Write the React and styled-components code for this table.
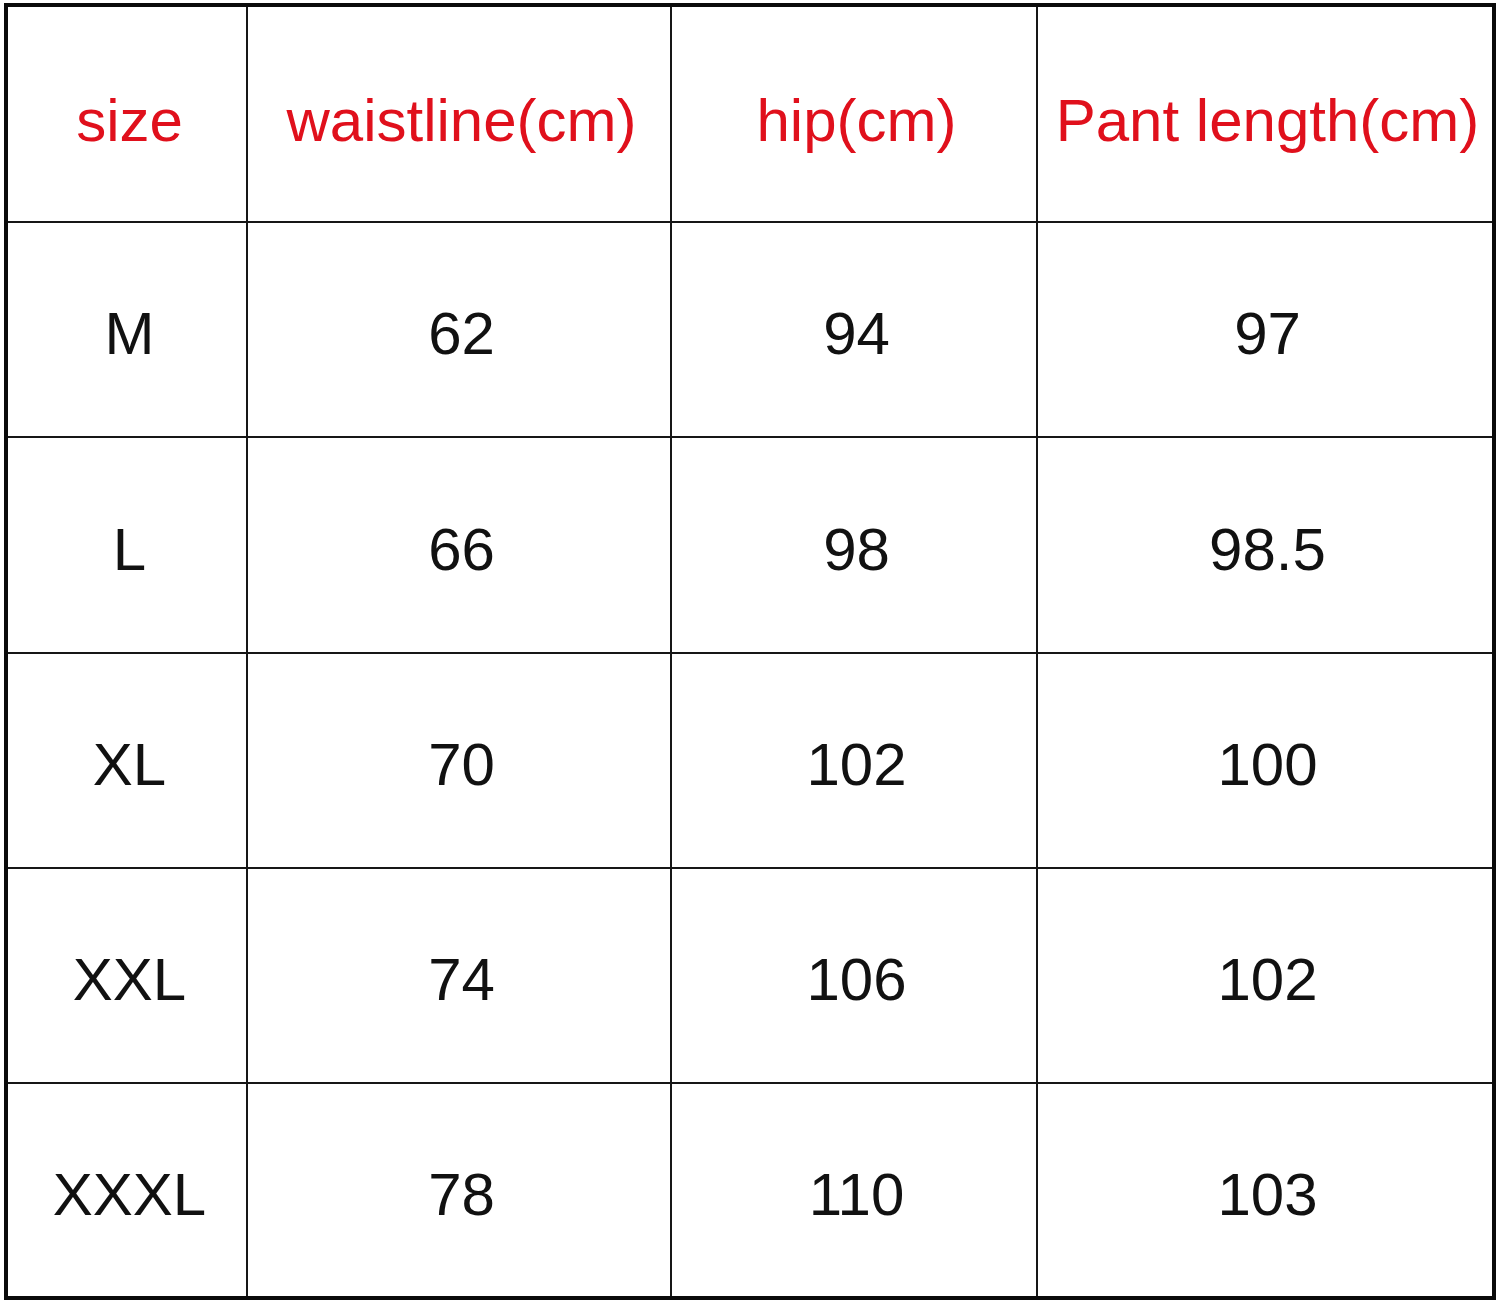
import React from 'react'
import styled, { createGlobalStyle } from 'styled-components'

const GlobalStyle = createGlobalStyle`
  html, body {
    margin: 0;
    padding: 0;
    background: #fff;
  }
  body {
    font-family: "Liberation Sans", Arial, sans-serif;
  }
`

const headers = ['size', 'waistline(cm)', 'hip(cm)', 'Pant length(cm)']

const rows = [
  ['M', '62', '94', '97'],
  ['L', '66', '98', '98.5'],
  ['XL', '70', '102', '100'],
  ['XXL', '74', '106', '102'],
  ['XXXL', '78', '110', '103'],
]

export default function App() {
  return (
    <>
      <GlobalStyle />
      <SizeChart>
        {headers.map((h) => (
          <Cell key={h} $head>
            {h}
          </Cell>
        ))}
        {rows.map((row) =>
          row.map((value, i) => <Cell key={row[0] + i}>{value}</Cell>)
        )}
      </SizeChart>
    </>
  )
}

const SizeChart = styled.div`
  display: grid;
  grid-template-columns: 238px 422px 364px 454px;
  grid-template-rows: 214px 213px 214px 213px 213px 212px;
  gap: 2px;
  width: max-content;
  margin: 3px 0 0 4px;
  border: 4px solid #0a0a0a;
  background: #161616;
`

const Cell = styled.div`
  display: flex;
  align-items: center;
  justify-content: center;
  box-sizing: border-box;
  padding-top: ${(p) => (p.$head ? '14px' : '9px')};
  padding-left: 5px;
  background: #fff;
  font-size: 60px;
  line-height: 1;
  white-space: nowrap;
  color: ${(p) => (p.$head ? '#e0101c' : '#111')};
`
